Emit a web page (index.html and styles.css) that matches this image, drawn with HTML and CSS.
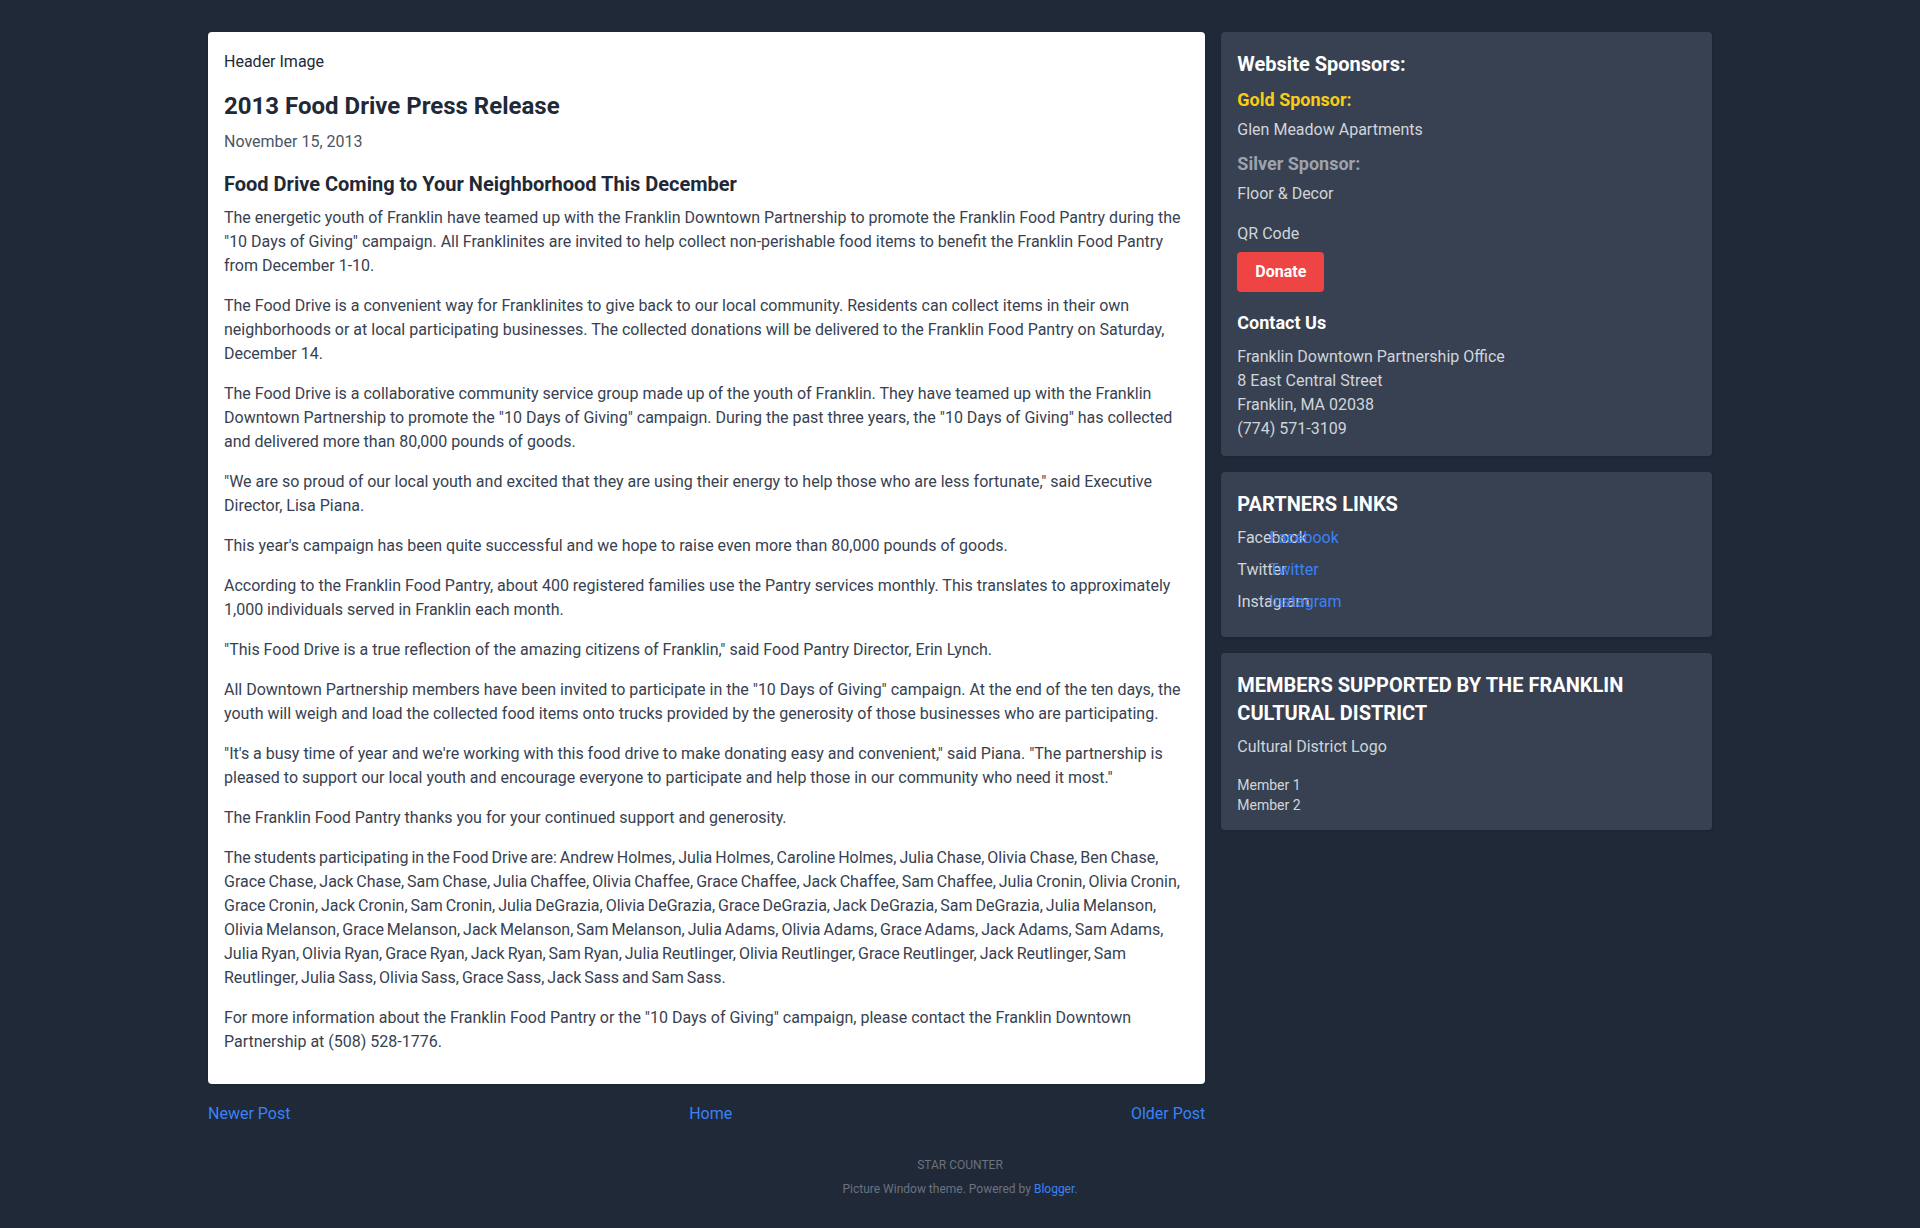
FILE: index.html
```html
<!DOCTYPE html>
<html lang="en">
<head>
<meta charset="utf-8">
<title>2013 Food Drive Press Release</title>
<link rel="stylesheet" href="styles.css">
</head>
<body>
<div class="container">
  <div class="layout">
    <main class="main-col">
      <article class="post">
        <div class="header-image">Header Image</div>
        <h1 class="post-title">2013 Food Drive Press Release</h1>
        <div class="post-date">November 15, 2013</div>
        <h2 class="post-subtitle">Food Drive Coming to Your Neighborhood This December</h2>
        <p>The energetic youth of Franklin have teamed up with the Franklin Downtown Partnership to promote the Franklin Food Pantry during the "10 Days of Giving" campaign. All Franklinites are invited to help collect non-perishable food items to benefit the Franklin Food Pantry from December 1-10.</p>
        <p>The Food Drive is a convenient way for Franklinites to give back to our local community. Residents can collect items in their own neighborhoods or at local participating businesses. The collected donations will be delivered to the Franklin Food Pantry on Saturday, December 14.</p>
        <p>The Food Drive is a collaborative community service group made up of the youth of Franklin. They have teamed up with the Franklin Downtown Partnership to promote the "10 Days of Giving" campaign. During the past three years, the "10 Days of Giving" has collected and delivered more than 80,000 pounds of goods.</p>
        <p>"We are so proud of our local youth and excited that they are using their energy to help those who are less fortunate," said Executive Director, Lisa Piana.</p>
        <p>This year's campaign has been quite successful and we hope to raise even more than 80,000 pounds of goods.</p>
        <p>According to the Franklin Food Pantry, about 400 registered families use the Pantry services monthly. This translates to approximately 1,000 individuals served in Franklin each month.</p>
        <p>"This Food Drive is a true reflection of the amazing citizens of Franklin," said Food Pantry Director, Erin Lynch.</p>
        <p>All Downtown Partnership members have been invited to participate in the "10 Days of Giving" campaign. At the end of the ten days, the youth will weigh and load the collected food items onto trucks provided by the generosity of those businesses who are participating.</p>
        <p>"It's a busy time of year and we're working with this food drive to make donating easy and convenient," said Piana. "The partnership is pleased to support our local youth and encourage everyone to participate and help those in our community who need it most."</p>
        <p>The Franklin Food Pantry thanks you for your continued support and generosity.</p>
        <p class="students">The students participating in the Food Drive are: Andrew Holmes, Julia Holmes, Caroline Holmes, Julia Chase, Olivia Chase, Ben Chase, Grace Chase, Jack Chase, Sam Chase, Julia Chaffee, Olivia Chaffee, Grace Chaffee, Jack Chaffee, Sam Chaffee, Julia Cronin, Olivia Cronin, Grace Cronin, Jack Cronin, Sam Cronin, Julia DeGrazia, Olivia DeGrazia, Grace DeGrazia, Jack DeGrazia, Sam DeGrazia, Julia Melanson, Olivia Melanson, Grace Melanson, Jack Melanson, Sam Melanson, Julia Adams, Olivia Adams, Grace Adams, Jack Adams, Sam Adams, Julia Ryan, Olivia Ryan, Grace Ryan, Jack Ryan, Sam Ryan, Julia Reutlinger, Olivia Reutlinger, Grace Reutlinger, Jack Reutlinger, Sam Reutlinger, Julia Sass, Olivia Sass, Grace Sass, Jack Sass and Sam Sass.</p>
        <p>For more information about the Franklin Food Pantry or the "10 Days of Giving" campaign, please contact the Franklin Downtown Partnership at (508) 528-1776.</p>
      </article>
      <nav class="post-nav">
        <a href="#">Newer Post</a>
        <a href="#">Home</a>
        <a href="#">Older Post</a>
      </nav>
    </main>

    <aside class="sidebar">
      <section class="widget">
        <h3 class="widget-title">Website Sponsors:</h3>
        <h4 class="sponsor-level gold">Gold Sponsor:</h4>
        <p class="sponsor-name">Glen Meadow Apartments</p>
        <h4 class="sponsor-level silver">Silver Sponsor:</h4>
        <p class="sponsor-name last">Floor &amp; Decor</p>
        <div class="qr">QR Code</div>
        <button class="donate" type="button">Donate</button>
        <h3 class="widget-title contact-title">Contact Us</h3>
        <address class="contact">
          Franklin Downtown Partnership Office<br>
          8 East Central Street<br>
          Franklin, MA 02038<br>
          (774) 571-3109
        </address>
      </section>

      <section class="widget">
        <h3 class="widget-title upper">PARTNERS LINKS</h3>
        <ul class="partner-list">
          <li><span class="icon-alt">Facebook</span><a href="#">Facebook</a></li>
          <li><span class="icon-alt">Twitter</span><a href="#">Twitter</a></li>
          <li><span class="icon-alt">Instagram</span><a href="#">Instagram</a></li>
        </ul>
      </section>

      <section class="widget">
        <h3 class="widget-title upper">MEMBERS SUPPORTED BY THE FRANKLIN CULTURAL DISTRICT</h3>
        <div class="district-logo">Cultural District Logo</div>
        <ul class="member-list">
          <li>Member 1</li>
          <li>Member 2</li>
        </ul>
      </section>
    </aside>
  </div>

  <footer class="site-footer">
    <div class="counter">STAR COUNTER</div>
    <div class="attribution">Picture Window theme. Powered by <a href="#">Blogger</a>.</div>
  </footer>
</div>
</body>
</html>
```
FILE: styles.css
```css
* { box-sizing: border-box; }

html, body {
  margin: 0;
  padding: 0;
}

body {
  background: #1f2937;
  font-family: Roboto, "Noto Sans", sans-serif;
  font-size: 16px;
  line-height: 24px;
  color: #1f2937;
}

a {
  color: #3b82f6;
  text-decoration: none;
}

.container {
  max-width: 1536px;
  margin: 0 auto;
  padding: 32px 16px 30px;
}

.layout {
  display: grid;
  grid-template-columns: repeat(3, minmax(0, 1fr));
  gap: 16px;
  align-items: start;
}

.main-col {
  grid-column: span 2 / span 2;
}

/* Post card */
.post {
  background: #ffffff;
  border-radius: 4px;
  padding: 18px 16px 14px;
  box-shadow: 0 1px 3px rgba(0, 0, 0, 0.12);
  color: #1f2937;
}

.header-image {
  margin-bottom: 16px;
  color: #1f2937;
}

.post-title {
  margin: 0 0 8px;
  font-size: 24px;
  line-height: 32px;
  font-weight: 700;
  color: #1f2937;
}

.post-date {
  color: #4b5563;
  margin-bottom: 16px;
}

.post-subtitle {
  margin: 0 0 8px;
  font-size: 20px;
  line-height: 28px;
  font-weight: 700;
  color: #1f2937;
}

.post p {
  margin: 0 0 16px;
  color: #374151;
}

.post p.students {
  word-spacing: -1px;
}

.post-nav {
  display: flex;
  justify-content: space-between;
  margin-top: 18px;
}

/* Sidebar */
.sidebar {
  display: flex;
  flex-direction: column;
  gap: 16px;
}

.widget {
  background: #374151;
  border-radius: 4px;
  padding: 18px 16px 15px;
  color: #d1d5db;
  box-shadow: 0 1px 3px rgba(0, 0, 0, 0.12);
}

.widget-title {
  margin: 0 0 8px;
  font-size: 20px;
  line-height: 28px;
  font-weight: 700;
  color: #ffffff;
}

.sponsor-level {
  margin: 0 0 4px;
  font-size: 18px;
  line-height: 28px;
  font-weight: 700;
}

.gold { color: #facc15; }
.silver { color: #9ca3af; }

.sponsor-name {
  margin: 0 0 8px;
}

.sponsor-name.last {
  margin-bottom: 16px;
}

.qr {
  margin-bottom: 6px;
}

.donate {
  display: inline-block;
  background: #ef4444;
  color: #ffffff;
  border: 0;
  border-radius: 4px;
  padding: 8px 18px;
  font-family: inherit;
  font-size: 16px;
  line-height: 24px;
  font-weight: 700;
  cursor: pointer;
}

.contact-title {
  margin-top: 17px;
  font-size: 18px;
}

.contact {
  font-style: normal;
}

.partner-list,
.member-list {
  list-style: none;
  margin: 0;
  padding: 0;
}

.partner-list li {
  display: flex;
  margin-bottom: 8px;
}

.icon-alt {
  width: 24px;
  margin-right: 8px;
  white-space: nowrap;
  overflow: visible;
  color: #d1d5db;
}

.district-logo {
  margin-bottom: 16px;
}

.member-list li {
  font-size: 14px;
  line-height: 20px;
  color: #d1d5db;
}

/* Footer */
.site-footer {
  margin-top: 31px;
  text-align: center;
  font-size: 12px;
  line-height: 16px;
  color: #6b7280;
}

.attribution {
  margin-top: 8px;
}
```
